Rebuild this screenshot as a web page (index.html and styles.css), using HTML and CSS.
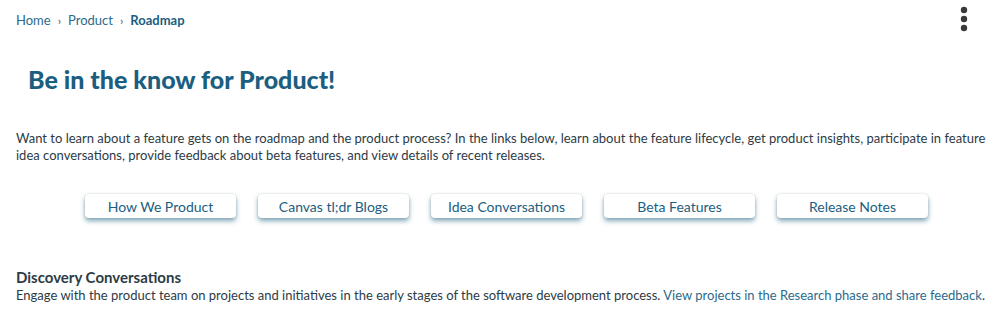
FILE: index.html
```html
<!DOCTYPE html>
<html lang="en">
<head>
  <meta charset="UTF-8">
  <title>Roadmap</title>
  <link rel="stylesheet" href="styles.css">
</head>
<body>
  <div class="topbar">
    <nav class="breadcrumbs">
      <a href="#">Home</a>
      <span class="sep">›</span>
      <a href="#">Product</a>
      <span class="sep">›</span>
      <span class="current">Roadmap</span>
    </nav>
    <button class="kebab" aria-label="More options">
      <svg width="8" height="26" viewBox="0 0 8 26">
        <circle cx="4" cy="4" r="3.2" fill="#3a3a3a"/>
        <circle cx="4" cy="13" r="3.2" fill="#3a3a3a"/>
        <circle cx="4" cy="22" r="3.2" fill="#3a3a3a"/>
      </svg>
    </button>
  </div>

  <h1 class="title">Be in the know for Product!</h1>

  <p class="intro">Want to learn about a feature gets on the roadmap and the product process? In the links below, learn about the feature lifecycle, get product insights, participate in feature idea conversations, provide feedback about beta features, and view details of recent releases.</p>

  <div class="links">
    <a class="link-btn" href="#">How We Product</a>
    <a class="link-btn" href="#">Canvas tl;dr Blogs</a>
    <a class="link-btn" href="#">Idea Conversations</a>
    <a class="link-btn" href="#">Beta Features</a>
    <a class="link-btn" href="#">Release Notes</a>
  </div>

  <div class="section">
    <h2>Discovery Conversations</h2>
    <p>Engage with the product team on projects and initiatives in the early stages of the software development process. <a href="#">View projects in the Research phase and share feedback</a>.</p>
  </div>
</body>
</html>
```

FILE: styles.css
```css
:root {
  --brand: #1b5e80;
  --link: #2b6a8c;
  --text: #2d3b45;
}

* {
  margin: 0;
  padding: 0;
  box-sizing: border-box;
}

body {
  font-family: Lato, "Open Sans", sans-serif;
  color: var(--text);
  background: #fff;
  padding: 0 12px 0 16px;
}

a {
  color: var(--link);
  text-decoration: none;
}

.topbar {
  display: flex;
  justify-content: space-between;
  align-items: flex-start;
  height: 64px;
}

.breadcrumbs {
  display: flex;
  align-items: center;
  gap: 7px;
  padding-top: 12px;
  font-size: 13px;
}

.breadcrumbs .sep {
  font-size: 12px;
  color: #555;
}

.breadcrumbs .current {
  font-weight: 700;
  color: var(--brand);
}

.kebab {
  border: none;
  background: none;
  padding: 6px 18px 0 0;
}

.title {
  font-size: 25px;
  font-weight: 900;
  color: var(--brand);
  padding-left: 12px;
  margin-bottom: 36px;
}

.intro {
  font-size: 13px;
  line-height: 17px;
  margin-bottom: 30px;
}

.links {
  display: flex;
  gap: 22px;
  padding-left: 69px;
  margin-bottom: 50px;
}

.link-btn {
  width: 151px;
  height: 24px;
  display: flex;
  align-items: center;
  justify-content: center;
  font-size: 14px;
  color: var(--brand);
  background: #fff;
  border-radius: 4px;
  box-shadow: 0 3px 5px rgba(27, 94, 128, 0.55), 0 0 2px rgba(0, 0, 0, 0.15);
}

.section h2 {
  font-size: 15px;
  font-weight: 700;
  line-height: 18px;
}

.section p {
  font-size: 13px;
  line-height: 18px;
}
```
